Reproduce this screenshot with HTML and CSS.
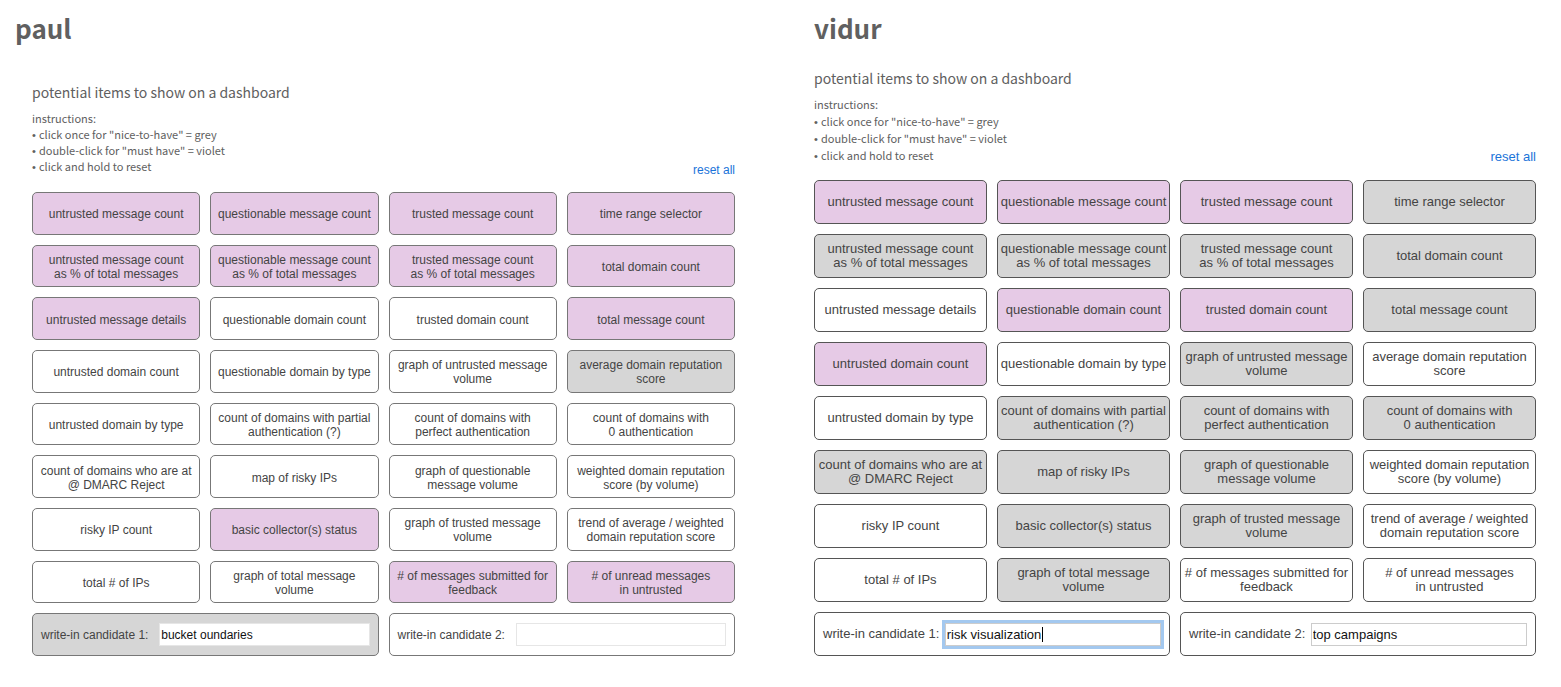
FILE: index.html
```html
<!DOCTYPE html>
<html lang="en">
<head>
<meta charset="utf-8">
<title>Dashboard items</title>
<link rel="stylesheet" href="styles.css">
</head>
<body>
<main class="page">
  <section class="panel panel-soft">
    <h1 class="name">paul</h1>
    <div class="board">
      <h2 class="title">potential items to show on a dashboard</h2>
      <div class="intro">
        <div class="instructions">
          <p>instructions:</p>
          <ul>
            <li>click once for "nice-to-have" = grey</li>
            <li>double-click for "must have" = violet</li>
            <li>click and hold to reset</li>
          </ul>
        </div>
        <a class="reset" href="#">reset all</a>
      </div>
      <div class="grid">
        <button class="tile must">untrusted message count</button>
        <button class="tile must">questionable message count</button>
        <button class="tile must">trusted message count</button>
        <button class="tile must">time range selector</button>
        <button class="tile must">untrusted message count<br>as % of total messages</button>
        <button class="tile must">questionable message count<br>as % of total messages</button>
        <button class="tile must">trusted message count<br>as % of total messages</button>
        <button class="tile must">total domain count</button>
        <button class="tile must">untrusted message details</button>
        <button class="tile">questionable domain count</button>
        <button class="tile">trusted domain count</button>
        <button class="tile must">total message count</button>
        <button class="tile">untrusted domain count</button>
        <button class="tile">questionable domain by type</button>
        <button class="tile">graph of untrusted message<br>volume</button>
        <button class="tile nice">average domain reputation<br>score</button>
        <button class="tile">untrusted domain by type</button>
        <button class="tile">count of domains with partial<br>authentication (?)</button>
        <button class="tile">count of domains with<br>perfect authentication</button>
        <button class="tile">count of domains with<br>0 authentication</button>
        <button class="tile">count of domains who are at<br>@ DMARC Reject</button>
        <button class="tile">map of risky IPs</button>
        <button class="tile">graph of questionable<br>message volume</button>
        <button class="tile">weighted domain reputation<br>score (by volume)</button>
        <button class="tile">risky IP count</button>
        <button class="tile must">basic collector(s) status</button>
        <button class="tile">graph of trusted message<br>volume</button>
        <button class="tile">trend of average / weighted<br>domain reputation score</button>
        <button class="tile">total # of IPs</button>
        <button class="tile">graph of total message<br>volume</button>
        <button class="tile must"># of messages submitted for<br>feedback</button>
        <button class="tile must"># of unread messages<br>in untrusted</button>
        <div class="write nice">
          <label for="p1">write-in candidate 1:</label>
          <span class="field"><input id="p1" type="text" value="bucket oundaries"></span>
        </div>
        <div class="write">
          <label for="p2">write-in candidate 2:</label>
          <span class="field"><input id="p2" type="text" value=""></span>
        </div>
      </div>
    </div>
  </section>

  <section class="panel">
    <h1 class="name">vidur</h1>
    <div class="board">
      <h2 class="title">potential items to show on a dashboard</h2>
      <div class="intro">
        <div class="instructions">
          <p>instructions:</p>
          <ul>
            <li>click once for "nice-to-have" = grey</li>
            <li>double-click for "must have" = violet</li>
            <li>click and hold to reset</li>
          </ul>
        </div>
        <a class="reset" href="#">reset all</a>
      </div>
      <div class="grid">
        <button class="tile must">untrusted message count</button>
        <button class="tile must">questionable message count</button>
        <button class="tile must">trusted message count</button>
        <button class="tile nice">time range selector</button>
        <button class="tile nice">untrusted message count<br>as % of total messages</button>
        <button class="tile nice">questionable message count<br>as % of total messages</button>
        <button class="tile nice">trusted message count<br>as % of total messages</button>
        <button class="tile nice">total domain count</button>
        <button class="tile">untrusted message details</button>
        <button class="tile must">questionable domain count</button>
        <button class="tile must">trusted domain count</button>
        <button class="tile nice">total message count</button>
        <button class="tile must">untrusted domain count</button>
        <button class="tile">questionable domain by type</button>
        <button class="tile nice">graph of untrusted message<br>volume</button>
        <button class="tile">average domain reputation<br>score</button>
        <button class="tile">untrusted domain by type</button>
        <button class="tile nice">count of domains with partial<br>authentication (?)</button>
        <button class="tile nice">count of domains with<br>perfect authentication</button>
        <button class="tile nice">count of domains with<br>0 authentication</button>
        <button class="tile nice">count of domains who are at<br>@ DMARC Reject</button>
        <button class="tile nice">map of risky IPs</button>
        <button class="tile nice">graph of questionable<br>message volume</button>
        <button class="tile">weighted domain reputation<br>score (by volume)</button>
        <button class="tile">risky IP count</button>
        <button class="tile nice">basic collector(s) status</button>
        <button class="tile nice">graph of trusted message<br>volume</button>
        <button class="tile">trend of average / weighted<br>domain reputation score</button>
        <button class="tile">total # of IPs</button>
        <button class="tile nice">graph of total message<br>volume</button>
        <button class="tile"># of messages submitted for<br>feedback</button>
        <button class="tile"># of unread messages<br>in untrusted</button>
        <div class="write">
          <label for="v1">write-in candidate 1:</label>
          <span class="field active"><input id="v1" type="text" value="risk visualization"><span class="caret"></span></span>
        </div>
        <div class="write">
          <label for="v2">write-in candidate 2:</label>
          <span class="field"><input id="v2" type="text" value="top campaigns"></span>
        </div>
      </div>
    </div>
  </section>
</main>
</body>
</html>
```
FILE: styles.css
```css
* {
  box-sizing: border-box;
}

body {
  margin: 0;
  background: #fff;
  color: #606060;
  font-family: "Noto Sans CJK SC", "Noto Sans", sans-serif;
}

.page {
  display: grid;
  grid-template-columns: 1fr 1fr;
  gap: 77px;
  min-height: 100vh;
  padding: 8px 25px 31px 15px;
}

.panel {
  --edge: #555;
  --line: 17px;
  --text: 13px;
  display: flex;
  flex-direction: column;
}

.panel-soft {
  --edge: #777;
  --line: 16px;
  --text: 12px;
}

.name {
  margin: 0;
  font-size: 26px;
  font-weight: 700;
  line-height: 40px;
}

.board {
  flex: 1;
  display: flex;
  flex-direction: column;
  padding-top: 19px;
}

.panel-soft .board {
  padding: 33px 2px 0 17px;
}

.title {
  margin: 0 0 7px;
  font-size: 14px;
  font-weight: 400;
  line-height: 22px;
}

.intro {
  display: flex;
  justify-content: space-between;
  align-items: flex-end;
  margin-bottom: 16px;
  font-size: 11px;
  line-height: var(--line);
}

.panel-soft .intro {
  margin-bottom: 18px;
}

.instructions p,
.instructions ul {
  margin: 0;
  padding: 0;
  list-style: none;
}

.instructions li::before {
  content: "• ";
  font-family: "Liberation Sans", Arial, sans-serif;
  line-height: 0;
}

.reset {
  color: #1a73d9;
  font: var(--text)/15px "Liberation Sans", Arial, sans-serif;
  text-decoration: none;
}

.panel-soft .reset {
  margin-bottom: -4px;
}

.grid {
  flex: 1;
  display: grid;
  grid-template-columns: repeat(4, minmax(0, 1fr));
  grid-auto-rows: 1fr;
  gap: 10px;
}

.tile,
.write {
  border: 1px solid var(--edge);
  border-radius: 5px;
  background: #fff;
  color: #444;
  font: var(--text)/14px "Liberation Sans", Arial, sans-serif;
}

.tile {
  padding: 0;
  white-space: nowrap;
}

.panel-soft .tile {
  padding-top: 2px;
}

.tile.must {
  background: #e6cae6;
}

.tile.nice,
.write.nice {
  background: #d6d6d6;
}

.write {
  grid-column: span 2;
  display: flex;
  align-items: center;
  justify-content: space-between;
  padding: 0 8px;
}

.field {
  flex: 0 0 64%;
  position: relative;
  display: flex;
}

.field input {
  width: 100%;
  height: 23px;
  padding: 0 1px;
  border: 1px solid #ccc;
  background: #fff;
  color: #111;
  font: inherit;
  outline: 0;
}

.panel-soft .field input {
  border-color: #e6e6e6;
}

.field.active input,
.field input:focus {
  box-shadow: 0 0 0 3px #a3c8ef;
}

.caret {
  position: absolute;
  top: 4px;
  left: 97px;
  width: 1px;
  height: 15px;
  background: #000;
}
```
